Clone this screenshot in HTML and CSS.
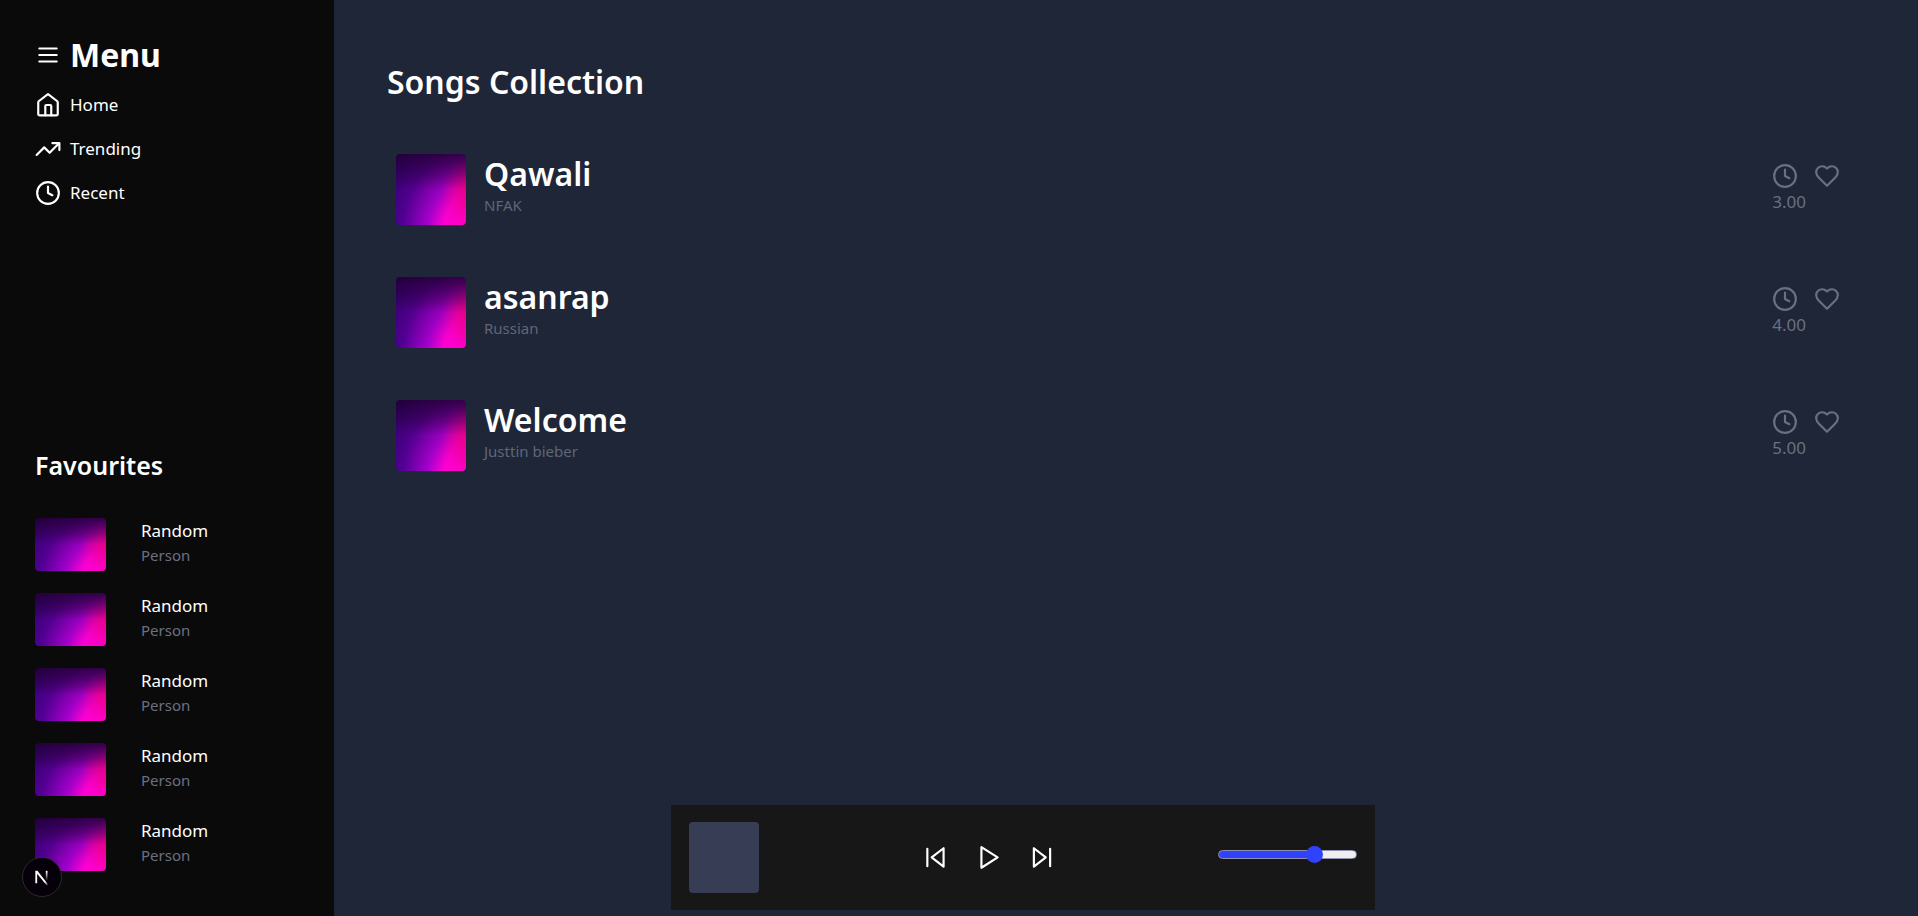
FILE: index.html
```html
<!DOCTYPE html>
<html lang="en">
<head>
<meta charset="utf-8">
<meta name="viewport" content="width=device-width, initial-scale=1">
<title>Songs Collection</title>
<link rel="stylesheet" href="styles.css">
</head>
<body>
<svg class="sprite" aria-hidden="true">
  <symbol id="clock" viewBox="0 0 24 24"><circle cx="12" cy="12" r="10"/><path d="M12 6v6l4 2"/></symbol>
  <symbol id="heart" viewBox="0 0 24 24"><path d="M19 14c1.490-1.460 3-3.210 3-5.500A5.500 5.500 0 0 0 16.500 3c-1.760 0-3 .5-4.500 2-1.500-1.500-2.740-2-4.500-2A5.500 5.500 0 0 0 2 8.500c0 2.300 1.500 4.050 3 5.500l7 7Z"/></symbol>
</svg>
<div class="app">
  <aside class="sidebar">
    <nav>
      <h1 class="menu-title">
        <svg class="icon" viewBox="0 0 24 24" aria-hidden="true"><path d="M4 6h16M4 12h16M4 18h16"/></svg>
        Menu
      </h1>
      <ul class="menu">
        <li><a class="menu-link" href="#home"><svg class="icon" viewBox="0 0 24 24" aria-hidden="true"><path d="M15 21.500V13a1 1 0 0 0-1-1h-3.500a1 1 0 0 0-1 1v8.500"/><path d="M3 9.800a2 2 0 0 1 .7-1.500L12 2l8.300 6.300a2 2 0 0 1 .7 1.500V20a1.500 1.500 0 0 1-1.500 1.500h-15A1.500 1.500 0 0 1 3 20z"/></svg>Home</a></li>
        <li><a class="menu-link" href="#trending"><svg class="icon" viewBox="0 0 24 24" aria-hidden="true"><path d="m22 7-8.500 8.500-5-5L1.500 17.500"/><path d="M16 6.500h6.500v6.500"/></svg>Trending</a></li>
        <li><a class="menu-link" href="#recent"><svg class="icon" viewBox="0 0 24 24" aria-hidden="true"><use href="#clock"/></svg>Recent</a></li>
      </ul>
    </nav>
    <section class="favourites">
      <h2 class="fav-title">Favourites</h2>
      <ul class="fav-list">
        <li class="fav"><span class="art fav-art"></span><div><p class="fav-name">Random</p><p class="fav-by">Person</p></div></li>
        <li class="fav"><span class="art fav-art"></span><div><p class="fav-name">Random</p><p class="fav-by">Person</p></div></li>
        <li class="fav"><span class="art fav-art"></span><div><p class="fav-name">Random</p><p class="fav-by">Person</p></div></li>
        <li class="fav"><span class="art fav-art"></span><div><p class="fav-name">Random</p><p class="fav-by">Person</p></div></li>
        <li class="fav"><span class="art fav-art"></span><div><p class="fav-name">Random</p><p class="fav-by">Person</p></div></li>
      </ul>
    </section>
  </aside>

  <main class="main">
    <h2 class="title">Songs Collection</h2>
    <ul class="songs">
      <li class="song">
        <span class="art song-art"></span>
        <div class="song-text"><h3 class="song-name">Qawali</h3><p class="song-by">NFAK</p></div>
        <div class="song-side">
          <div><svg class="icon" viewBox="0 0 24 24" aria-hidden="true"><use href="#clock"/></svg><span>3.00</span></div>
          <button type="button" aria-label="Like Qawali"><svg class="icon" viewBox="0 0 24 24" aria-hidden="true"><use href="#heart"/></svg></button>
        </div>
      </li>
      <li class="song">
        <span class="art song-art"></span>
        <div class="song-text"><h3 class="song-name">asanrap</h3><p class="song-by">Russian</p></div>
        <div class="song-side">
          <div><svg class="icon" viewBox="0 0 24 24" aria-hidden="true"><use href="#clock"/></svg><span>4.00</span></div>
          <button type="button" aria-label="Like asanrap"><svg class="icon" viewBox="0 0 24 24" aria-hidden="true"><use href="#heart"/></svg></button>
        </div>
      </li>
      <li class="song">
        <span class="art song-art"></span>
        <div class="song-text"><h3 class="song-name">Welcome</h3><p class="song-by">Justtin bieber</p></div>
        <div class="song-side">
          <div><svg class="icon" viewBox="0 0 24 24" aria-hidden="true"><use href="#clock"/></svg><span>5.00</span></div>
          <button type="button" aria-label="Like Welcome"><svg class="icon" viewBox="0 0 24 24" aria-hidden="true"><use href="#heart"/></svg></button>
        </div>
      </li>
    </ul>
  </main>
</div>

<section class="player" aria-label="Player">
  <span class="cover"></span>
  <div class="controls">
    <button type="button" aria-label="Previous"><svg class="icon" viewBox="0 0 24 24" aria-hidden="true"><path d="M19 3v17L8 11.500zM4 3.500v16"/></svg></button>
    <button type="button" aria-label="Play"><svg class="icon" viewBox="0 0 24 24" aria-hidden="true"><path d="M5 2v19l15-9.500z"/></svg></button>
    <button type="button" aria-label="Next"><svg class="icon" viewBox="0 0 24 24" aria-hidden="true"><path d="M4.500 3v17l11-8.500zM19.500 3.500v16"/></svg></button>
  </div>
  <input class="volume" type="range" min="0" max="100" value="72" aria-label="Volume">
</section>

<button class="dev-badge" type="button" aria-label="Open developer tools">
  <svg viewBox="0 0 40 40" aria-hidden="true">
    <defs>
      <linearGradient id="fade-a" gradientUnits="userSpaceOnUse" x1="20" y1="20" x2="27" y2="29"><stop offset=".5" stop-color="#fff"/><stop offset="1" stop-color="#fff" stop-opacity="0"/></linearGradient>
      <linearGradient id="fade-b" gradientUnits="userSpaceOnUse" x1="0" y1="14" x2="0" y2="24"><stop offset="0" stop-color="#fff"/><stop offset="1" stop-color="#fff" stop-opacity="0"/></linearGradient>
    </defs>
    <path d="M13 26.500V13.500h2.200l11.300 14.500-1.500 1L14.900 16.500v10z" fill="url(#fade-a)"/>
    <path d="M24 13.500h1.800v11H24z" fill="url(#fade-b)"/>
  </svg>
</button>
</body>
</html>
```
FILE: styles.css
```css
* {
  box-sizing: border-box;
  margin: 0;
  padding: 0;
}

body {
  background: #0a0a0a;
  color: #fff;
  font: 17px/26px "Noto Sans", "Open Sans", sans-serif;
}

ul {
  list-style: none;
}

a {
  color: inherit;
  text-decoration: none;
}

button {
  display: block;
  border: 0;
  background: none;
  color: inherit;
  font: inherit;
  cursor: pointer;
}

.sprite {
  display: none;
}

.icon {
  display: block;
  flex: none;
  width: 26px;
  height: 26px;
  fill: none;
  stroke: currentColor;
  stroke-width: 2;
  stroke-linecap: round;
  stroke-linejoin: round;
}

.app {
  display: flex;
  min-height: 100vh;
}

.sidebar {
  display: flex;
  flex: none;
  flex-direction: column;
  justify-content: space-between;
  width: 334px;
  padding: 35px 35px 45px;
  background: #0a0a0a;
}

.menu-title {
  display: flex;
  align-items: center;
  gap: 9px;
  font-size: 32px;
  font-weight: 700;
  line-height: 40px;
}

.menu {
  display: grid;
  gap: 18px;
  padding-top: 17px;
}

.menu-link {
  display: flex;
  align-items: center;
  gap: 9px;
}

.fav-title {
  font-size: 25px;
  font-weight: 600;
  line-height: 35px;
}

.fav-list {
  display: grid;
  gap: 22px;
  padding-top: 35px;
}

.fav {
  display: flex;
  align-items: flex-start;
  gap: 35px;
}

.fav-name {
  line-height: 26px;
}

.fav-by {
  color: #6a7082;
  font-size: 15px;
  line-height: 22px;
}

.art {
  flex: none;
  border-radius: 4px;
  background:
    linear-gradient(to bottom, rgba(28, 0, 40, 0.75), rgba(28, 0, 40, 0.4) 30%, rgba(28, 0, 40, 0.1) 50%, rgba(28, 0, 40, 0)),
    radial-gradient(ellipse 45% 50% at 110% 50%, #ff0095 20%, rgba(255, 0, 149, 0)),
    radial-gradient(ellipse 140% 170% at 115% 110%, #ff00b4, #ff00d4 34%, rgba(190, 0, 225, 0.8) 50%, rgba(120, 0, 190, 0.4) 75%, rgba(60, 0, 130, 0)),
    linear-gradient(to right, #38007a, #5a0090);
}

.fav-art {
  width: 71px;
  height: 53px;
}

.main {
  flex: 1;
  padding: 62px 70px 106px 53px;
  background: #1e2638;
}

.title {
  font-size: 32px;
  font-weight: 600;
  line-height: 40px;
}

.songs {
  display: grid;
  gap: 52px;
  padding: 52px 8px 0 9px;
}

.song {
  display: flex;
  align-items: flex-start;
  gap: 18px;
}

.song-art {
  width: 70px;
  height: 71px;
}

.song-text {
  flex: 1;
}

.song-name {
  font-size: 32px;
  font-weight: 600;
  line-height: 40px;
}

.song-by {
  color: #5f6679;
  font-size: 15px;
  line-height: 22px;
}

.song-side {
  display: flex;
  align-items: flex-start;
  gap: 8px;
  padding-top: 9px;
  color: #6a7082;
}

.player {
  position: fixed;
  bottom: 6px;
  left: 35%;
  display: flex;
  align-items: center;
  justify-content: space-between;
  width: 704px;
  padding: 17px 18px;
  background: #171717;
}

.cover {
  width: 70px;
  height: 71px;
  border-radius: 4px;
  background: #363d55;
}

.controls {
  display: flex;
  gap: 27px;
}

.volume {
  width: 139px;
  height: 18px;
  margin-bottom: 6px;
  appearance: none;
  background: none;
}

.volume::-webkit-slider-runnable-track {
  height: 9px;
  border: 1px solid #8f8fb0;
  border-radius: 5px;
  background: linear-gradient(to right, #3142ff 70%, #efefef 70%);
}

.volume::-webkit-slider-thumb {
  width: 17px;
  height: 17px;
  margin-top: -5px;
  border-radius: 50%;
  background: #3142ff;
  appearance: none;
}

.dev-badge {
  position: fixed;
  bottom: 19px;
  left: 22px;
  width: 40px;
  height: 40px;
  border: 1px solid #2b2b2e;
  border-radius: 50%;
  background: #05000a;
}

.dev-badge svg {
  display: block;
  width: 38px;
  height: 38px;
}
```
